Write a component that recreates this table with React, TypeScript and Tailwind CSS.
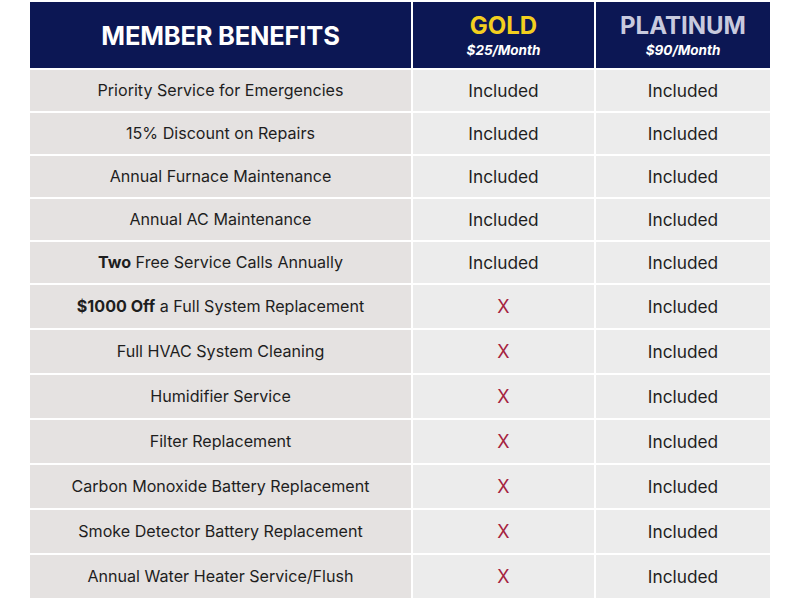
import React from "react";

type Row = { label: React.ReactNode; gold: boolean };

const rows: Row[] = [
  { label: "Priority Service for Emergencies", gold: true },
  { label: "15% Discount on Repairs", gold: true },
  { label: "Annual Furnace Maintenance", gold: true },
  { label: "Annual AC Maintenance", gold: true },
  { label: (<><b className="font-bold">Two</b> Free Service Calls Annually</>), gold: true },
  { label: (<><b className="font-bold">$1000 Off</b> a Full System Replacement</>), gold: false },
  { label: "Full HVAC System Cleaning", gold: false },
  { label: "Humidifier Service", gold: false },
  { label: "Filter Replacement", gold: false },
  { label: "Carbon Monoxide Battery Replacement", gold: false },
  { label: "Smoke Detector Battery Replacement", gold: false },
  { label: "Annual Water Heater Service/Flush", gold: false },
];

export default function App() {
  return (
    <div className="w-[800px] h-[600px] bg-white font-['Inter','Liberation_Sans',sans-serif] text-[#1e1e1e] overflow-hidden">
      <div className="pt-[2px] pl-[30px] flex flex-col gap-y-[2px]">
        <div className="grid grid-cols-[381px_181px_174px] gap-x-[2px] h-[66px]">
          <div className="bg-[#0c1754] flex items-center justify-center text-white font-bold text-[25.5px] tracking-[-0.2px] pt-[2px]">
            MEMBER BENEFITS
          </div>
          <div className="bg-[#0c1754] flex flex-col items-center justify-center">
            <div className="text-[#f3cf1f] font-bold text-[24px] leading-[26px]">GOLD</div>
            <div className="text-white font-bold italic text-[13.5px] leading-[16px] mt-[3px]">$25/Month</div>
          </div>
          <div className="bg-[#0c1754] flex flex-col items-center justify-center">
            <div className="text-[#c8cade] font-bold text-[24px] leading-[26px]">PLATINUM</div>
            <div className="text-white font-bold italic text-[13.5px] leading-[16px] mt-[3px]">$90/Month</div>
          </div>
        </div>
        {rows.map((r, i) => (
          <div
            key={i}
            className={`grid grid-cols-[381px_181px_174px] gap-x-[2px] ${i < 5 ? "h-[41px]" : "h-[43px]"}`}
          >
            <div className="bg-[#e5e2e1] flex items-center justify-center text-[16.1px]">
              <span>{r.label}</span>
            </div>
            <div className="bg-[#ececec] flex items-center justify-center text-[17.3px]">
              {r.gold ? (
                <span>Included</span>
              ) : (
                <span className="text-[#a5223f] text-[18px]">X</span>
              )}
            </div>
            <div className="bg-[#ececec] flex items-center justify-center text-[17.3px]">
              <span>Included</span>
            </div>
          </div>
        ))}
      </div>
    </div>
  );
}
